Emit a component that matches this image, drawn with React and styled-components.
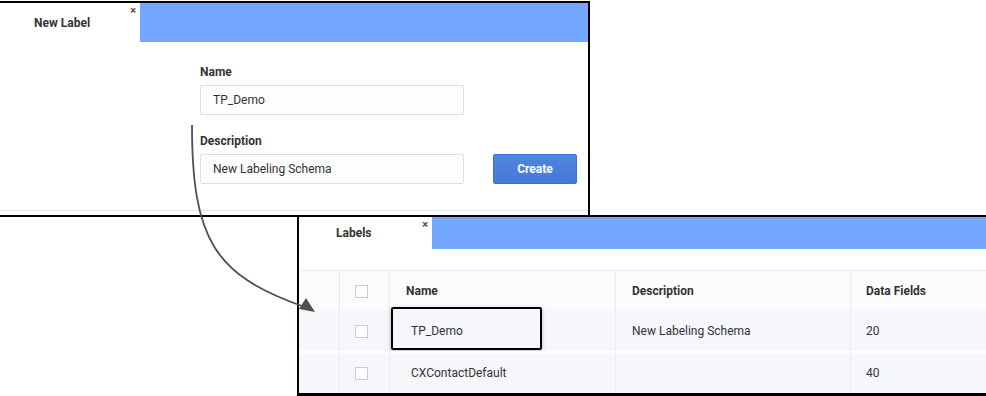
import React from 'react';
import styled, { createGlobalStyle } from 'styled-components';

const GlobalStyle = createGlobalStyle`
  * { box-sizing: border-box; }
  body {
    margin: 0;
    background: #ffffff;
    font-family: Roboto, "Liberation Sans", Arial, sans-serif;
    color: #333333;
  }
`;

const Canvas = styled.div`
  position: relative;
  width: 986px;
  height: 396px;
  overflow: hidden;
  background: #ffffff;
  padding-top: 1px;
`;

const Window = styled.div`
  position: relative;
  background: #ffffff;
  display: flex;
  flex-direction: column;
`;

const FormWindow = styled(Window)`
  width: 590px;
  height: 216px;
  border-top: 2px solid #000;
  border-right: 2px solid #000;
  border-bottom: 2px solid #000;
`;

const ListWindow = styled(Window)`
  margin-left: 297px;
  margin-top: -2px;
  height: 181px;
  border-top: 2px solid #000;
  border-left: 2px solid #000;
  border-bottom: 3px solid #000;
`;

const TabBar = styled.div`
  display: flex;
  height: ${(p) => p.$height}px;
  background: #74a8ff;
  flex-shrink: 0;
`;

const Tab = styled.div`
  position: relative;
  width: ${(p) => p.$width}px;
  padding-left: ${(p) => p.$pad}px;
  background: #ffffff;
  display: flex;
  align-items: center;
  font-size: 12px;
  font-weight: 700;
  color: #333;
`;

const Close = styled.span`
  position: absolute;
  top: 3px;
  right: 4px;
  font-size: 11px;
  line-height: 10px;
  font-weight: 700;
  color: #4a4a4a;
`;

const FormBody = styled.div`
  flex: 1;
  padding: 22px 0 0 200px;
  display: flex;
  flex-direction: column;
  border-bottom: 1px solid #e3e6eb;
  margin-bottom: 4px;
`;

const FieldRow = styled.div`
  display: flex;
  align-items: flex-end;
  gap: 29px;
  margin-bottom: ${(p) => p.$gap || 0}px;
`;

const Field = styled.div`
  display: flex;
  flex-direction: column;
  gap: 5px;
`;

const Label = styled.div`
  font-size: 12px;
  line-height: 16px;
  font-weight: 700;
  color: #333;
`;

const Input = styled.div`
  width: 264px;
  height: 30px;
  border: 1px solid #dcdfe6;
  border-radius: 2px;
  background: #fdfdfd;
  padding-left: 12px;
  display: flex;
  align-items: center;
  font-size: 12px;
  color: #333;
`;

const Button = styled.div`
  width: 84px;
  height: 30px;
  border: 1px solid #3d6fd5;
  border-radius: 2px;
  background: linear-gradient(#5185e2, #4678d8);
  color: #ffffff;
  font-size: 12px;
  font-weight: 700;
  display: flex;
  align-items: center;
  justify-content: center;
`;

const Spacer = styled.div`
  height: 21px;
  flex-shrink: 0;
`;

const Table = styled.div`
  display: grid;
  grid-template-columns: 40px 50px 226px 235px 1fr;
  border-top: 1px solid #e8ebf0;
`;

const Cell = styled.div`
  position: relative;
  height: ${(p) => p.$h}px;
  display: flex;
  align-items: center;
  padding-left: ${(p) => p.$pad || 0}px;
  font-size: 12px;
  font-weight: ${(p) => (p.$head ? 700 : 400)};
  color: #333;
  background: ${(p) => (p.$head ? '#fcfcfd' : '#f5f7fb')};
  border-left: ${(p) => (p.$first ? 'none' : '1px solid #e8ebf0')};
  border-top: ${(p) => (p.$sep ? '2px solid #ffffff' : 'none')};
`;

const Check = styled.span`
  width: 13px;
  height: 13px;
  border: 1px solid #c6cdd8;
  background: #ffffff;
  margin-top: ${(p) => p.$offset || 0}px;
`;

const Highlight = styled.div`
  position: absolute;
  left: 1px;
  top: -3px;
  width: 151px;
  height: 43px;
  border: 2px solid #000;
  border-radius: 2px;
  box-shadow: 0 1px 4px rgba(0, 0, 0, 0.25);
  pointer-events: none;
`;

const ArrowLayer = styled.svg`
  position: absolute;
  left: 0;
  top: 0;
  pointer-events: none;
`;

const rows = [
  { name: 'TP_Demo', description: 'New Labeling Schema', fields: '20', marked: true },
  { name: 'CXContactDefault', description: '', fields: '40' },
];

export default function App() {
  return (
    <>
      <GlobalStyle />
      <Canvas>
        <FormWindow>
          <TabBar $height={39}>
            <Tab $width={140} $pad={34}>
              New Label
              <Close>×</Close>
            </Tab>
          </TabBar>
          <FormBody>
            <FieldRow $gap={18}>
              <Field>
                <Label>Name</Label>
                <Input>TP_Demo</Input>
              </Field>
            </FieldRow>
            <FieldRow>
              <Field>
                <Label>Description</Label>
                <Input>New Labeling Schema</Input>
              </Field>
              <Button>Create</Button>
            </FieldRow>
          </FormBody>
        </FormWindow>

        <ListWindow>
          <TabBar $height={32}>
            <Tab $width={133} $pad={37}>
              Labels
              <Close>×</Close>
            </Tab>
          </TabBar>
          <Spacer />
          <Table>
            <Cell $h={39} $head $first />
            <Cell $h={39} $head $pad={15}>
              <Check $offset={2} />
            </Cell>
            <Cell $h={39} $head $pad={16}>Name</Cell>
            <Cell $h={39} $head $pad={16}>Description</Cell>
            <Cell $h={39} $head $pad={15}>Data Fields</Cell>
            {rows.map((row, i) => (
              <React.Fragment key={row.name}>
                <Cell $h={i ? 42 : 41} $sep={i > 0} $first />
                <Cell $h={i ? 42 : 41} $sep={i > 0} $pad={15}>
                  <Check $offset={i ? 0 : 1} />
                </Cell>
                <Cell $h={i ? 42 : 41} $sep={i > 0} $pad={21}>
                  {row.name}
                  {row.marked && <Highlight />}
                </Cell>
                <Cell $h={i ? 42 : 41} $sep={i > 0} $pad={16}>{row.description}</Cell>
                <Cell $h={i ? 42 : 41} $sep={i > 0} $pad={15}>{row.fields}</Cell>
              </React.Fragment>
            ))}
          </Table>
        </ListWindow>

        <ArrowLayer width="986" height="396" viewBox="0 0 986 396">
          <path
            d="M192 125 C 192 240, 215 275, 302 306"
            fill="none"
            stroke="#505050"
            strokeWidth="1.8"
          />
          <path d="M315 312 L299 309 L306 298 Z" fill="#505050" />
        </ArrowLayer>
      </Canvas>
    </>
  );
}
